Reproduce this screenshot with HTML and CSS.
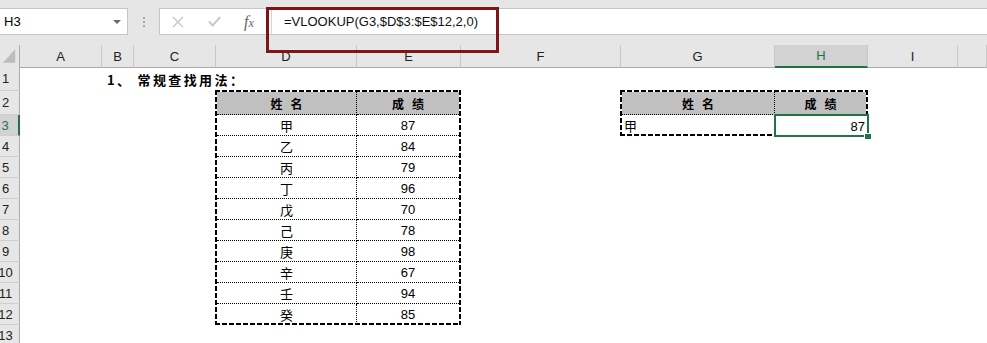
FILE: index.html
```html
<!DOCTYPE html>
<html lang="zh-CN">
<head>
    <meta charset="UTF-8">
    <meta name="viewport" content="width=device-width, initial-scale=1.0">
    <title>VLOOKUP 常规查找</title>
    <link rel="stylesheet" href="styles.css">
</head>
<body>

    <div class="toolbar">
        <div class="namebox">
            <span>H3</span>
            <span class="arrow"></span>
        </div>
        <div class="grip"><i></i><i></i><i></i></div>
        <div class="formula">
            <div class="fbtns">
                <svg class="btn-x" width="12" height="12" viewBox="0 0 12 12">
                    <path d="M1 1L11 11M11 1L1 11" stroke="#c4c4c4" stroke-width="1.3" fill="none"/>
                </svg>
                <svg class="btn-ok" width="13" height="11" viewBox="0 0 13 11">
                    <path d="M1 5.5L4.6 9.4L12.2 1" stroke="#c8c8c8" stroke-width="2" fill="none"/>
                </svg>
                <span class="fx"><i>f</i><i class="sx">x</i></span>
            </div>
            <div class="finput">=VLOOKUP(G3,$D$3:$E$12,2,0)</div>
        </div>
    </div>
    <div class="callout"></div>

    <div class="colhdr">
        <div class="corner">
            <svg width="20" height="22" viewBox="0 0 20 22">
                <polygon points="3,18 16,18 16,4" fill="#bdbdbd"/>
            </svg>
        </div>
        <div>A</div>
        <div>B</div>
        <div>C</div>
        <div>D</div>
        <div>E</div>
        <div>F</div>
        <div>G</div>
        <div class="active">H</div>
        <div>I</div>
        <div></div>
    </div>

    <div class="body">
        <div class="rowhdr">
            <div class="tall">1</div>
            <div class="tall">2</div>
            <div class="active">3</div>
            <div>4</div>
            <div>5</div>
            <div>6</div>
            <div>7</div>
            <div>8</div>
            <div>9</div>
            <div>10</div>
            <div>11</div>
            <div>12</div>
            <div>13</div>
        </div>

        <div class="cells">
            <div class="title"><span class="num">1、</span>常规查找用法：</div>

            <div class="t1">
                <div class="c h k">姓名</div><div class="c h">成绩</div>
                <div class="c k">甲</div><div class="c">87</div>
                <div class="c k">乙</div><div class="c">84</div>
                <div class="c k">丙</div><div class="c">79</div>
                <div class="c k">丁</div><div class="c">96</div>
                <div class="c k">戊</div><div class="c">70</div>
                <div class="c k">己</div><div class="c">78</div>
                <div class="c k">庚</div><div class="c">98</div>
                <div class="c k">辛</div><div class="c">67</div>
                <div class="c k">壬</div><div class="c">94</div>
                <div class="c k last">癸</div><div class="c last">85</div>
            </div>

            <div class="t2">
                <div class="c h k">姓名</div><div class="c h">成绩</div>
                <div class="c k left last">甲</div><div class="c last"></div>
            </div>

            <div class="sel">87</div>
        </div>
    </div>

</body>
</html>
```

FILE: styles.css
```css
* {
    box-sizing: border-box;
}

body {
    margin: 0;
    position: relative;
    background: #fff;
    font-family: 'Liberation Sans', Arial, sans-serif;
    font-size: 13px;
    color: #000;
    overflow: hidden;
}

/* formula bar */
.toolbar {
    height: 45px;
    background: #e6e6e6;
    display: flex;
    align-items: flex-start;
    padding-top: 8px;
}

.namebox {
    width: 128px;
    height: 27px;
    background: #fff;
    border: 1px solid #c6c6c6;
    border-left: none;
    display: flex;
    align-items: center;
    justify-content: space-between;
    padding: 0 6px 0 4px;
}

.arrow {
    width: 0;
    height: 0;
    border-top: 4px solid #6a6a6a;
    border-left: 4px solid transparent;
    border-right: 4px solid transparent;
}

.grip {
    width: 31px;
    height: 27px;
    display: flex;
    flex-direction: column;
    align-items: center;
    justify-content: center;
    gap: 2px;
}

.grip i {
    width: 2px;
    height: 2px;
    background: #a6a6a6;
}

.formula {
    flex: 1;
    height: 27px;
    background: #fff;
    border: 1px solid #c6c6c6;
    border-right: none;
    display: flex;
}

.fbtns {
    width: 112px;
    display: flex;
    align-items: center;
    border-right: 1px solid #d6d6d6;
}

.btn-x {
    margin-left: 12px;
}

.btn-ok {
    margin-left: 24px;
}

.fx {
    margin-left: 23px;
    font-family: 'Liberation Serif', serif;
    color: #666;
    font-size: 16px;
    line-height: 1;
}

.fx .sx {
    font-size: 12px;
}

.finput {
    padding-left: 12px;
    line-height: 25px;
    color: #111;
}

.callout {
    position: absolute;
    left: 266px;
    top: 7px;
    width: 233px;
    height: 46px;
    border: 3px solid #7e1517;
}

/* sheet headers */
.colhdr {
    display: grid;
    grid-template-columns: 20px 82px 32px 82px 141px 104px 160px 154px 93px 90px 1fr;
    height: 22px;
    background: #e6e6e6;
}

.colhdr div {
    border-bottom: 1px solid #ababab;
    border-right: 1px solid #c8c8c8;
    display: flex;
    align-items: center;
    justify-content: center;
    color: #222;
}

.colhdr .corner {
    border-right-color: #ababab;
}

.colhdr .active {
    background: #d2d2d2;
    color: #217346;
    border-bottom: 2px solid #217346;
}

.body {
    display: flex;
}

.rowhdr {
    width: 20px;
    display: flex;
    flex-direction: column;
    background: #e6e6e6;
}

.rowhdr div {
    height: 21px;
    border-right: 1px solid #ababab;
    border-bottom: 1px solid #cfcfcf;
    display: flex;
    align-items: center;
    justify-content: center;
    padding-right: 8px;
    color: #222;
}

.rowhdr .tall {
    height: 24px;
}

.rowhdr .active {
    background: #d2d2d2;
    color: #217346;
    border-right: 2px solid #217346;
}

/* cells */
.cells {
    flex: 1;
    display: grid;
    grid-template-columns: 82px 32px 82px 141px 104px 160px 154px 93px 90px 1fr;
    grid-template-rows: 24px 24px repeat(11, 21px);
}

.title {
    grid-column: 2 / 6;
    grid-row: 1;
    align-self: center;
    padding-left: 5px;
    font-family: 'Noto Sans CJK SC', sans-serif;
    font-weight: 700;
    font-size: 13px;
    letter-spacing: 2.4px;
}

.title .num {
    margin-right: 5px;
}

/* medium dashed outline drawn in the 2px padding ring */
.t1, .t2 {
    margin: -1px 0 0 -1px;
    padding: 2px;
    display: grid;
    background:
        repeating-linear-gradient(90deg, #000 0 5px, transparent 5px 7px) top left / 100% 2px no-repeat,
        repeating-linear-gradient(90deg, #000 0 5px, transparent 5px 7px) bottom left / 100% 2px no-repeat,
        repeating-linear-gradient(180deg, #000 0 5px, transparent 5px 7px) top left / 2px 100% no-repeat,
        repeating-linear-gradient(180deg, #000 0 5px, transparent 5px 7px) top right / 2px 100% no-repeat;
    font-family: 'Noto Sans CJK SC', sans-serif;
}

.t1 {
    grid-column: 4 / 6;
    grid-row: 2 / 13;
    grid-template-columns: 140px 1fr;
    grid-template-rows: 23px repeat(9, 21px) 1fr;
}

.t2 {
    grid-column: 7 / 9;
    grid-row: 2 / 4;
    grid-template-columns: 153px 1fr;
    grid-template-rows: 23px 1fr;
}

.c {
    border-bottom: 1px dotted #000;
    display: flex;
    align-items: center;
    justify-content: center;
    padding-top: 1px;
    font-family: 'Liberation Sans', Arial, sans-serif;
}

.c.k {
    border-right: 1px dotted #000;
    font-family: 'Noto Sans CJK SC', sans-serif;
}

.c.last {
    border-bottom: none;
}

.c.left {
    justify-content: flex-start;
    padding-left: 2px;
}

.c.h {
    background: #c0c0c0;
    font-family: 'Noto Sans CJK SC', sans-serif;
    font-weight: 700;
    font-size: 12px;
    letter-spacing: 8px;
    padding-left: 8px;
}

.sel {
    grid-column: 8;
    grid-row: 3;
    margin: -1px;
    border: 2px solid #217346;
    background: #fff;
    position: relative;
    z-index: 1;
    display: flex;
    align-items: center;
    justify-content: flex-end;
    padding: 1px 2px 0 0;
}

.sel::after {
    content: "";
    position: absolute;
    right: -4px;
    bottom: -4px;
    width: 6px;
    height: 5px;
    background: #217346;
    box-shadow: -1px -1px 0 #fff;
}
```
